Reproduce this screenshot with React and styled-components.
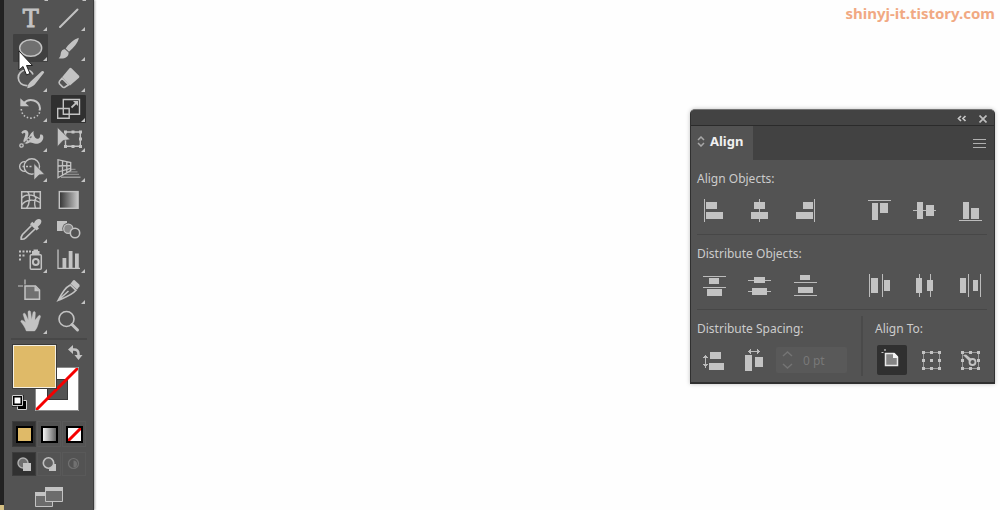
import React from 'react';
import styled, { createGlobalStyle } from 'styled-components';

const GlobalStyle = createGlobalStyle`
  * {
    box-sizing: border-box;
  }

  body {
    margin: 0;
    background: #fefefe;
    font-family: 'Noto Sans', sans-serif;
  }

  button {
    padding: 0;
    border: none;
    background: none;
    font: inherit;
    color: inherit;
  }

  svg {
    display: block;
  }
`;

const Workspace = styled.div`
  display: flex;
  min-height: 100vh;
  overflow: hidden;
`;

const WindowEdge = styled.div`
  width: 4px;
  background: linear-gradient(to top, #d6c184 5px, #222222 5px);
`;

const Toolbar = styled.aside`
  width: 90px;
  padding: 0 6px 0 7px;
  background: #535353;
  border-right: 1px solid #3c3c3c;
  box-shadow: 1px 0 2px rgba(0, 0, 0, 0.35);
`;

const ScrolledRow = styled.div`
  height: 3px;
  padding-left: 31px;
`;

const ToolGrid = styled.div`
  display: grid;
  grid-template-columns: 35px 35px;
  grid-auto-rows: 1fr;
  column-gap: 3px;
  align-items: center;
  height: 333px;
  padding-left: 2px;
`;

const ToolButton = styled.button`
  width: 35px;
  height: 28px;
  border-radius: 1px;
  background: ${props => props.$tone || 'transparent'};
`;

const ToolDivider = styled.hr`
  height: 2px;
  margin: 2px 0 4px;
  border: none;
  background: #484848;
`;

const SwatchGrid = styled.div`
  display: grid;
  grid-template-columns: 23px 22px 22px 1fr;
  grid-template-rows: 23px 22px 22px;
  margin-left: 1px;
`;

const FillSwatch = styled.button`
  grid-area: 1 / 1 / 3 / 3;
  z-index: 1;
  border: 1px solid #3a3a3a;
  background: #dfba68;
  box-shadow: inset 0 0 0 1px #f4efe2;
`;

const StrokeSwatch = styled.button`
  grid-area: 2 / 2 / 4 / 4;
`;

const SwapButton = styled.button`
  grid-area: 1 / 3 / 2 / 5;
  justify-self: start;
  align-self: start;
  margin-left: 10px;
`;

const DefaultsButton = styled.button`
  grid-area: 3 / 1 / 4 / 2;
  align-self: end;
`;

const ModeRow = styled.div`
  display: grid;
  grid-template-columns: repeat(3, 24px);
  gap: 1px;
  height: ${props => props.$height};
  margin: ${props => props.$margin};
`;

const ModeButton = styled.button`
  display: flex;
  align-items: center;
  justify-content: center;
  border: 1px solid ${props => (props.$active ? '#3c3c3c' : '#595959')};
  background: ${props => (props.$active ? '#313131' : 'transparent')};
`;

const ScreenModeButton = styled.button`
  display: block;
  margin: 11px 0 0 24px;
`;

const Canvas = styled.main`
  flex: 1;
  display: flex;
  flex-direction: column;
  align-items: flex-end;
  padding: 0 5px 0 0;
`;

const BlogLink = styled.a`
  height: 26px;
  font-size: 15px;
  line-height: 26px;
  font-weight: 700;
  color: #f1a983;
  text-decoration: none;
`;

const Panel = styled.section`
  width: 305px;
  margin-top: 83px;
  border: 1px solid #303030;
  border-width: 1px 1px 2px;
  border-top-color: #747474;
  border-radius: 5px 5px 0 0;
  background: #535353;
  box-shadow: 0 0 4px rgba(0, 0, 0, 0.25);
  overflow: hidden;
`;

const TitleBar = styled.header`
  display: flex;
  align-items: center;
  justify-content: flex-end;
  gap: 12px;
  height: 16px;
  padding: 2px 7px 0 0;
  background: #434343;
  border-bottom: 1px solid #2b2b2b;
`;

const TabStrip = styled.div`
  display: flex;
  justify-content: space-between;
  height: 34px;
  background: #424242;
`;

const Tab = styled.button`
  display: flex;
  align-items: center;
  gap: 5px;
  width: 62px;
  padding: 0 0 4px 6px;
  background: #535353;
  font-size: 13px;
  font-weight: 700;
  color: #f0f0f0;
`;

const MenuButton = styled.button`
  padding-right: 8px;
`;

const Section = styled.div`
  padding-top: 9px;
  height: ${props => (props.$last ? '72px' : '75px')};
`;

const SectionTitle = styled.h2`
  margin: 0 0 0 6px;
  font-size: 12px;
  line-height: 20px;
  font-weight: 400;
  color: #cccccc;
`;

const Divider = styled.hr`
  height: 1px;
  margin: -1px 7px 0 6px;
  border: none;
  background: #474747;
`;

const ButtonRow = styled.div`
  display: flex;
  justify-content: space-between;
`;

const ButtonGroup = styled.div`
  display: flex;
`;

const AlignButton = styled.button`
  display: flex;
  align-items: center;
  justify-content: center;
  width: ${props => (props.$narrow ? '34px' : '46px')};
  height: 44px;
`;

const BottomSections = styled.div`
  display: grid;
  grid-template-columns: 1fr 133px;
`;

const AlignToSection = styled.div`
  border-left: 2px solid #4a4a4a;
  height: 60px;
  margin-top: 6px;
  padding-top: 3px;
`;

const AlignToTitle = styled(SectionTitle)`
  margin-left: 12px;
`;

const SpacingField = styled.label`
  display: flex;
  align-items: center;
  gap: 10px;
  width: 71px;
  height: 26px;
  margin: 8px 0 0 5px;
  padding-left: 6px;
  border-radius: 2px;
  background: #595959;
`;

const SpacingInput = styled.input`
  width: 40px;
  padding: 0;
  border: none;
  background: transparent;
  font: 12px 'Noto Sans', sans-serif;
  color: #787878;
`;

const AlignToRow = styled.div`
  display: flex;
  gap: 9px;
  padding: 6px 0 0 14px;
`;

const AlignToButton = styled.button`
  display: flex;
  align-items: center;
  justify-content: center;
  width: 30px;
  height: 30px;
  border-radius: 2px;
  background: ${props => (props.$active ? '#303030' : 'transparent')};
`;

const Cursor = styled.svg`
  position: absolute;
  left: 18px;
  top: 50px;
  z-index: 2;
  pointer-events: none;
`;

const ICON = '#c3c3c3';
const MORE = 'M34 23V27H30Z';

const Stroke = ({ w = 1.5, ...rest }) => (
  <path fill="none" stroke={ICON} strokeWidth={w} {...rest} />
);

const TOOLS = [
  {
    name: 'Type', more: true,
    art: (
      <text x="17.7" y="22.6" textAnchor="middle" fontFamily="DejaVu Serif" fontSize="24" stroke={ICON} strokeWidth="0.9">T</text>
    ),
  },
  { name: 'Line Segment', more: true, art: <Stroke d="M9 23 26.5 5.5" w={2} strokeLinecap="round" /> },
  {
    name: 'Ellipse', more: true, tone: '#404040',
    art: <ellipse cx="17.7" cy="14" rx="11" ry="8.3" fill="#707070" stroke={ICON} strokeWidth="1.4" />,
  },
  {
    name: 'Paintbrush', more: true,
    art: (
      <>
        <path d="M27.8 3.8C23.5 5 17 10.500 14.7 14.500L18 17.700C22 14.500 27.500 8.500 27.800 3.800Z" />
        <path d="M14 15.2C11 15.2 9.9 17.500 9.700 19.800 9.500 22.200 9 23.500 7.600 24.300 12.500 25.300 17.900 23.700 17.600 18.600Z" />
      </>
    ),
  },
  {
    name: 'Blob Brush', more: true,
    art: (
      <>
        <Stroke d="M14.5 20.5C9 21 5.500 17.500 5.300 13 5.200 8.500 8.500 5.200 13 5 16.500 5 19 6.800 20 9.500" w={1.7} />
        <path d="M28.700 6.200Q30.500 5.500 31.200 7.500L21.800 19.500C20 21.500 17.500 22.500 14.200 23.300 14.600 20.500 15.600 18.300 17.600 16.500Z" />
      </>
    ),
  },
  {
    name: 'Eraser', more: true,
    art: (
      <>
        <path d="M18.500 3.200Q19.500 2.300 20.500 3.200L28 10.800Q28.800 11.800 28 12.800L19 20.500 11 12.300Z" />
        <Stroke d="M11 13.300 8.500 16.200Q7.700 17.500 8.500 18.700L11.500 21.900Q12.500 22.800 13.700 22.200L17.500 19.800Z" w={1.6} />
      </>
    ),
  },
  {
    name: 'Rotate', more: true,
    art: (
      <>
        <Stroke d="M10.500 8.500C16.500 2 26.500 5.500 27 13.500L26.500 15.500" w={2} />
        <path d="M7.300 3.300V11.300H16Z" />
        <Stroke d="M8.300 14C9 26 25 25.500 26.800 16.500" w={1.6} strokeDasharray="1.500 2" />
      </>
    ),
  },
  {
    name: 'Scale', more: true, tone: '#303030',
    art: (
      <>
        <Stroke d="M12.300 4.500H28.500V19.300H12.300ZM6.700 13.500H18.200V23.300H6.700Z" w={1.4} />
        <Stroke d="M20.500 12.500 25.500 7.700" w={1.8} />
        <path d="M22 6H27V11Z" />
      </>
    ),
  },
  {
    name: 'Width', more: true,
    art: (
      <>
        <path d="M8.300 7.800C10 4 14.800 4.300 15.400 8 15.800 10.700 14 12.500 14.400 13.700 16.300 12.500 16.800 8.500 20.700 6 19.900 9.300 21.500 13 24 13.800 26.500 14.300 27.300 12 27 9.800 29.500 8.800 30.800 11.200 30.200 13.500 29.300 17.300 26 19 22.800 18.800 19.500 18.600 18.300 16.500 15.800 18 13.500 19.200 11.500 18.800 10.500 16.800 10 15 12.600 11.200 12.300 8.500 11.500 7.300 10.300 7.800 10 9Z" />
        <Stroke d="M9 20 18.500 11.500" w={1.3} stroke="#666666" />
        <circle cx="8.500" cy="20.500" r="1.700" fill="#535353" stroke={ICON} strokeWidth="1.300" />
        <circle cx="15.500" cy="14.500" r="1.700" fill="#535353" stroke={ICON} strokeWidth="1.300" />
      </>
    ),
  },
  {
    name: 'Free Transform', more: true,
    art: (
      <>
        <Stroke d="M14.500 7H29.300V21.300H14.500Z" w={1.4} />
        <path d="M6.500 2.500 19 14.500 12 15.500 6.500 21.500Z" stroke="#535353" strokeWidth="0.500" />
        <path d="M13 5.500H16V8.500H13ZM20.500 5.500H23.500V8.500H20.500ZM28 5.500H31V8.500H28ZM28 12.500H31V15.500H28ZM28 20H31V23H28ZM20.500 20H23.500V23H20.500ZM13 20H16V23H13Z" />
      </>
    ),
  },
  {
    name: 'Shape Builder', more: true,
    art: (
      <>
        <Stroke d="M12.500 6.700A4.900 4.900 0 1 0 12.500 16.300" w={1.4} />
        <circle cx="18.800" cy="11.500" r="7.700" fill="none" stroke={ICON} strokeWidth="1.400" />
        <Stroke d="M9.500 11.500H20" w={1.6} strokeDasharray="2 1.500" />
        <path d="M21 8.500 31.500 19.200 26 19.900 21 25Z" stroke="#535353" strokeWidth="0.600" />
      </>
    ),
  },
  {
    name: 'Perspective Grid', more: true,
    art: (
      <>
        <Stroke d="M7 4.700V22.700L19.700 15.500V7.500ZM11.500 5.700V20M15.800 6.600V17.600M7 11 19.700 10.500M7 17 19.700 13.300" w={1.3} />
        <path d="M20 13.800H24.500V15H20ZM18 16.200H26.500V17.400H18ZM14 18.800H28V20H14Z" opacity="0.500" />
        <path d="M10 21.600H29.500V22.800H10Z" opacity="0.800" />
      </>
    ),
  },
  {
    name: 'Mesh',
    art: (
      <>
        <Stroke d="M8.700 5.700H27.300V22.300H8.700Z" w={1.5} />
        <Stroke d="M14.500 5.500C17.500 9 17 18 13.500 22.500M21.500 5.500C20.500 8 21 10 23 12 21 15 21.500 19 22.500 22.500M8.700 12C13 7.500 20 8.500 27 13M8.700 19C13 12.500 22 13.500 27 16.500" w={1.4} />
      </>
    ),
  },
  {
    name: 'Gradient',
    art: (
      <>
        <linearGradient id="toolGradient">
          <stop offset="0" stopColor="#333333" />
          <stop offset="1" stopColor="#c8c8c8" />
        </linearGradient>
        <rect x="8.300" y="5.600" width="18.800" height="16.700" fill="url(#toolGradient)" stroke={ICON} strokeWidth="1.400" />
      </>
    ),
  },
  {
    name: 'Eyedropper', more: true,
    art: (
      <>
        <path d="M17 8.200 19.200 5.800 21 7.200C22.500 3 26.500 2 28 4 29.300 6.500 27 9 24.800 10.700L26 12.500 23.500 14.600Z" />
        <Stroke d="M18.500 9.500 9.500 18.500C8.500 19.800 8 21.500 8.200 23.200 9.800 23.400 11.500 22.900 12.700 21.800L22 13" w={1.7} />
      </>
    ),
  },
  {
    name: 'Blend',
    art: (
      <>
        <path d="M6 5H16V15H6Z" />
        <circle cx="17.300" cy="12.800" r="6" fill="#535353" />
        <circle cx="17.300" cy="12.800" r="4.600" fill="#888888" stroke={ICON} strokeWidth="1.300" />
        <circle cx="24" cy="17" r="4.700" fill="#535353" stroke={ICON} strokeWidth="1.600" />
      </>
    ),
  },
  {
    name: 'Symbol Sprayer', more: true,
    art: (
      <>
        <rect x="17.300" y="8.800" width="11" height="14.500" rx="1" fill="none" stroke={ICON} strokeWidth="1.500" />
        <path d="M20.500 3.500H25V5H26.500V9H19V5H20.500ZM6 4.500H8V6.500H6ZM9.500 4.500H11.500V6.500H9.500ZM13 4.500H15V6.500H13ZM16 4.500H18V6.500H16ZM6 8.500H8V10.500H6ZM9.500 8.500H11.500V10.500H9.500ZM6 12.500H8V14.500H6Z" />
        <circle cx="22.800" cy="16" r="2.900" fill="none" stroke={ICON} strokeWidth="2" />
      </>
    ),
  },
  {
    name: 'Column Graph', more: true,
    art: (
      <>
        <Stroke d="M7 3.500V22.300H29" w={1.3} />
        <path d="M11.500 12H15.300V22H11.500ZM17.700 5H21.500V22H17.700ZM24 7.500H27.800V22H24Z" />
      </>
    ),
  },
  {
    name: 'Artboard',
    art: (
      <>
        <path d="M12 9H22.500L26.500 13V22.300H12Z" fill="#707070" stroke={ICON} strokeWidth="1.500" />
        <path d="M21.500 9 26.800 14.300H21.500Z" />
        <Stroke d="M5 9H10M12 2.500V7.500" w={1.2} />
      </>
    ),
  },
  {
    name: 'Slice', more: true,
    art: (
      <>
        <Stroke d="M19.300 8C14.500 10.500 12 14.500 7.200 23.300 13.500 20.500 20.500 18.500 25 13.300ZM7.500 23 17.500 14" w={1.6} />
        <path d="M19.500 6.700 22 3.500Q22.800 2.800 23.700 3.300L28.300 7.500Q28.900 8.300 28.500 9.200L26 12.700Z" />
      </>
    ),
  },
  {
    name: 'Hand', more: true,
    art: (
      <path d="M13.300 24C12 20 9.500 17 7.800 14.800 7.500 13 9.500 12.800 10.700 13.900L12.600 15.500 10.300 8C9.800 6 12 5.500 12.600 7.300L15.300 13 15 5.200C15 3.300 17.500 3.300 17.700 5.200L18.600 12.600 20 5.600C20.500 4 22.600 4.400 22.400 6.200L21.900 13.300 25.400 8.900C26.500 7.600 28.200 8.700 27.300 10.400 25.500 14 25.500 20 21.700 24Z" stroke={ICON} strokeWidth="0.400" />
    ),
  },
  {
    name: 'Zoom',
    art: (
      <>
        <circle cx="15.500" cy="12" r="7.500" fill="none" stroke={ICON} strokeWidth="1.600" />
        <Stroke d="M21 17.500 26.500 23" w={3} strokeLinecap="round" />
      </>
    ),
  },
];

// [x, y, width, height] boxes on a 24px grid
const ALIGN_OBJECTS = [
  { name: 'Horizontal Align Left', lines: [[2, 0, 1, 23]], bars: [[4, 3, 11, 7], [4, 13, 17, 7]] },
  { name: 'Horizontal Align Center', lines: [[11, 0, 1, 23]], bars: [[6, 3, 11, 7], [3, 13, 17, 7]] },
  { name: 'Horizontal Align Right', lines: [[20, 0, 1, 23]], bars: [[9, 3, 10, 7], [2, 13, 17, 7]] },
  { name: 'Vertical Align Top', lines: [[1, 1, 23, 1]], bars: [[5, 4, 6, 17], [13, 4, 8, 10]] },
  { name: 'Vertical Align Center', lines: [[0, 11, 23, 1]], bars: [[4, 3, 6, 17], [13, 6, 8, 11]] },
  { name: 'Vertical Align Bottom', lines: [[0, 21, 23, 1]], bars: [[4, 3, 6, 17], [12, 9, 8, 11]] },
];

const DISTRIBUTE_OBJECTS = [
  { name: 'Vertical Distribute Top', lines: [[1, 2, 23, 1], [1, 13, 23, 1]], bars: [[7, 4, 10, 6], [5, 15, 15, 7]] },
  { name: 'Vertical Distribute Center', lines: [[0, 6, 23, 1], [0, 17, 23, 1]], bars: [[6, 3, 11, 6], [4, 14, 15, 7]] },
  { name: 'Vertical Distribute Bottom', lines: [[0, 8, 23, 1], [0, 21, 23, 1]], bars: [[6, 1, 10, 5], [4, 13, 15, 6]] },
  { name: 'Horizontal Distribute Left', lines: [[2, 0, 1, 23], [15, 0, 1, 23]], bars: [[4, 4, 7, 15], [17, 6, 6, 11]] },
  { name: 'Horizontal Distribute Center', lines: [[6, 0, 1, 23], [17, 0, 1, 23]], bars: [[3, 4, 6, 15], [14, 6, 6, 11]] },
  { name: 'Horizontal Distribute Right', lines: [[9, 0, 1, 23], [21, 0, 1, 23]], bars: [[1, 4, 6, 15], [14, 6, 5, 11]] },
];

const DISTRIBUTE_SPACING = [
  {
    name: 'Vertical Distribute Space',
    lines: [[3, 6, 1, 13], [1, 8, 5, 1], [1, 15, 5, 1], [2, 7, 3, 1], [2, 16, 3, 1]],
    bars: [[8, 3, 11, 7], [7, 14, 15, 7]],
  },
  {
    name: 'Horizontal Distribute Space',
    lines: [[6, 2, 12, 1], [8, 0, 1, 5], [15, 0, 1, 5], [7, 1, 1, 3], [16, 1, 1, 3]],
    bars: [[3, 6, 7, 16], [13, 8, 8, 10]],
  },
];

const AlignIcon = ({ lines, bars }) => (
  <svg width="24" height="24" aria-hidden="true">
    {[...lines, ...bars].map(([x, y, width, height], i) => (
      <rect key={i} x={x} y={y} width={width} height={height} fill={i < lines.length ? '#bcbcbc' : ICON} />
    ))}
  </svg>
);

const renderAlignButtons = (items) => items.map((item) => (
  <AlignButton key={item.name} aria-label={item.name}>
    <AlignIcon lines={item.lines} bars={item.bars} />
  </AlignButton>
));

const HANDLES = 'M3 3H6V6H3ZM11 3H14V6H11ZM19 3H22V6H19ZM3 11H6V14H3ZM19 11H22V14H19ZM3 19H6V22H3ZM11 19H14V22H11ZM19 19H22V22H19Z';

const ColorModes = () => (
  <ModeRow $height="26px" $margin="10px 0 0 1px">
    <ModeButton $active aria-label="Color">
      <svg width="17" height="17">
        <rect x="1" y="1" width="15" height="15" fill="#dfba68" stroke="#000000" strokeWidth="2" />
      </svg>
    </ModeButton>
    <ModeButton aria-label="Gradient fill">
      <svg width="17" height="17">
        <linearGradient id="modeGradient">
          <stop offset="0" stopColor="#ffffff" />
          <stop offset="1" stopColor="#555555" />
        </linearGradient>
        <rect x="1" y="1" width="15" height="15" fill="url(#modeGradient)" stroke="#000000" strokeWidth="2" />
      </svg>
    </ModeButton>
    <ModeButton aria-label="None">
      <svg width="17" height="17">
        <rect x="1" y="1" width="15" height="15" fill="#ffffff" />
        <path d="M2 15 15 2" stroke="#f50000" strokeWidth="3" />
        <rect x="1" y="1" width="15" height="15" fill="none" stroke="#000000" strokeWidth="2" />
      </svg>
    </ModeButton>
  </ModeRow>
);

const DrawModes = () => (
  <ModeRow $height="24px" $margin="5px 0 0 1px">
    <ModeButton $active aria-label="Draw Normal">
      <svg width="16" height="16">
        <circle cx="7" cy="7" r="5" fill="#707070" stroke="#b0b0b0" strokeWidth="1.400" />
        <path d="M7 7H15V15H7Z" fill={ICON} />
      </svg>
    </ModeButton>
    <ModeButton aria-label="Draw Behind">
      <svg width="16" height="16">
        <path d="M8 8H15V15H8Z" fill={ICON} />
        <circle cx="7.500" cy="7" r="5.200" fill="#606060" stroke="#c0c0c0" strokeWidth="1.600" />
      </svg>
    </ModeButton>
    <ModeButton disabled aria-label="Draw Inside">
      <svg width="16" height="16">
        <circle cx="7.500" cy="7.500" r="5" fill="none" stroke="#717171" strokeWidth="1.200" />
        <path d="M7.500 7.500V4.500A3 3 0 0 1 7.500 11.500Z" fill="#717171" />
      </svg>
    </ModeButton>
  </ModeRow>
);

const ToolPanel = () => (
  <Toolbar aria-label="Tools">
    <ScrolledRow>
      <svg width="46" height="3">
        <path d="M6 -3V1H2ZM44 -3V1H40Z" fill={ICON} />
      </svg>
    </ScrolledRow>
    <ToolGrid>
      {TOOLS.map((tool) => (
        <ToolButton key={tool.name} $tone={tool.tone} aria-label={tool.name}>
          <svg width="35" height="28" fill={ICON}>
            {tool.art}
            {tool.more && <path d={MORE} />}
          </svg>
        </ToolButton>
      ))}
    </ToolGrid>
    <ToolDivider />
    <SwatchGrid>
      <FillSwatch aria-label="Fill" />
      <StrokeSwatch aria-label="Stroke">
        <svg width="44" height="44">
          <path d="M0 0H44V44H0ZM12 12V33H33V12Z" fill="#ffffff" fillRule="evenodd" />
          <rect x="12.500" y="12.500" width="20" height="20" fill="#535353" stroke="#383838" />
          <path d="M1 43 43 1" stroke="#f50000" strokeWidth="3" />
          <path d="M.5 .5H43.500V43.500H.5Z" fill="none" stroke="#8b8b8b" />
        </svg>
      </StrokeSwatch>
      <SwapButton aria-label="Swap Fill and Stroke">
        <svg width="16" height="17">
          <path d="M4 5.500H7Q11.500 5.500 11.500 10V12" fill="none" stroke={ICON} strokeWidth="2.500" />
          <path d="M6 1V10L1 5.500ZM7.500 11H15.500L11.500 16Z" fill={ICON} />
        </svg>
      </SwapButton>
      <DefaultsButton aria-label="Default Fill and Stroke">
        <svg width="16" height="16">
          <path d="M5.500 5.500H14.500V14.500H5.500Z" fill="#000000" stroke="#d0d0d0" />
          <path d="M9 9H11V11H9Z" fill="#ffffff" />
          <path d="M1 1H10V10H1Z" fill="#ffffff" stroke="#000000" strokeWidth="3" />
          <path d="M.5 .5H10.500V10.500H.5Z" fill="none" stroke="#d0d0d0" />
        </svg>
      </DefaultsButton>
    </SwatchGrid>
    <ColorModes />
    <DrawModes />
    <ScreenModeButton aria-label="Change Screen Mode">
      <svg width="28" height="20">
        <path d="M.5 5.500H17.500V19.500H.5Z" fill="#6c6c6c" stroke={ICON} />
        <path d="M0 5H18V9H0Z" fill={ICON} />
        <path d="M10.500 .5H27.500V14.500H10.500Z" fill="#6c6c6c" stroke={ICON} />
        <path d="M10 0H28V4H10Z" fill={ICON} />
      </svg>
    </ScreenModeButton>
  </Toolbar>
);

const AlignPanel = () => (
  <Panel aria-label="Align panel">
    <TitleBar>
      <button aria-label="Collapse">
        <svg width="10" height="7">
          <path d="M4 1 1.500 3.500 4 6M8.500 1 6 3.500 8.500 6" fill="none" stroke="#c8c8c8" strokeWidth="1.700" />
        </svg>
      </button>
      <button aria-label="Close">
        <svg width="8" height="8">
          <path d="M.5 .5 7.500 7.500M7.500 .5 .5 7.500" fill="none" stroke="#bdbdbd" strokeWidth="1.700" />
        </svg>
      </button>
    </TitleBar>
    <TabStrip>
      <Tab>
        <svg width="8" height="11">
          <path d="M1 4 4 1 7 4M1 7 4 10 7 7" fill="none" stroke="#a8a8a8" strokeWidth="1.500" />
        </svg>
        Align
      </Tab>
      <MenuButton aria-label="Panel menu">
        <svg width="13" height="9">
          <path d="M0 .5H13M0 4.500H13M0 8.500H13" stroke="#b0b0b0" />
        </svg>
      </MenuButton>
    </TabStrip>

    <Section>
      <SectionTitle>Align Objects:</SectionTitle>
      <ButtonRow>
        <ButtonGroup>{renderAlignButtons(ALIGN_OBJECTS.slice(0, 3))}</ButtonGroup>
        <ButtonGroup>{renderAlignButtons(ALIGN_OBJECTS.slice(3))}</ButtonGroup>
      </ButtonRow>
    </Section>
    <Divider />
    <Section>
      <SectionTitle>Distribute Objects:</SectionTitle>
      <ButtonRow>
        <ButtonGroup>{renderAlignButtons(DISTRIBUTE_OBJECTS.slice(0, 3))}</ButtonGroup>
        <ButtonGroup>{renderAlignButtons(DISTRIBUTE_OBJECTS.slice(3))}</ButtonGroup>
      </ButtonRow>
    </Section>
    <Divider />
    <BottomSections>
      <Section $last>
        <SectionTitle>Distribute Spacing:</SectionTitle>
        <ButtonGroup>
          <AlignButton aria-label={DISTRIBUTE_SPACING[0].name}>
            <AlignIcon {...DISTRIBUTE_SPACING[0]} />
          </AlignButton>
          <AlignButton $narrow aria-label={DISTRIBUTE_SPACING[1].name}>
            <AlignIcon {...DISTRIBUTE_SPACING[1]} />
          </AlignButton>
          <SpacingField>
            <svg width="11" height="18">
              <path d="M1 5 5.500 1 10 5M1 13 5.500 17 10 13" fill="none" stroke="#747474" strokeWidth="1.500" />
            </svg>
            <SpacingInput aria-label="Spacing" defaultValue="0 pt" disabled />
          </SpacingField>
        </ButtonGroup>
      </Section>
      <AlignToSection>
        <AlignToTitle>Align To:</AlignToTitle>
        <AlignToRow>
          <AlignToButton $active aria-label="Align to Artboard">
            <svg width="24" height="24">
              <path d="M5.500 5.500H14L17.500 9V17.500H5.500Z" fill="#858585" stroke="#e8e8e8" strokeWidth="1.500" />
              <path d="M13 5H14.500L18 8.500V10H13Z" fill="#f4f4f4" />
              <path d="M1.500 4.500H3.500M5 1V3" stroke="#c8c8c8" strokeWidth="1.200" />
            </svg>
          </AlignToButton>
          <AlignToButton aria-label="Align to Selection">
            <svg width="24" height="24" fill={ICON}>
              <path d="M4.500 4.500H20.500V20.500H4.500Z" fill="none" stroke="#999999" />
              <path d={HANDLES} />
              <path d="M11 11H14V14H11Z" />
            </svg>
          </AlignToButton>
          <AlignToButton aria-label="Align to Key Object">
            <svg width="24" height="24" fill={ICON}>
              <path d="M4.500 4.500H20.500V20.500H4.500Z" fill="none" stroke="#999999" />
              <path d={HANDLES} />
              <path d="M5 7 8 6.500 14 11.500 12 14Z" />
              <circle cx="14.500" cy="14" r="3" fill="none" stroke={ICON} strokeWidth="1.800" />
            </svg>
          </AlignToButton>
        </AlignToRow>
      </AlignToSection>
    </BottomSections>
  </Panel>
);

const App = () => {
  return (
    <>
      <GlobalStyle />
      <Workspace>
        <WindowEdge />
        <ToolPanel />
        <Canvas>
          <BlogLink href="#">shinyj-it.tistory.com</BlogLink>
          <AlignPanel />
        </Canvas>
        <Cursor width="16" height="27" viewBox="0 0 16 27">
          <path d="M1 1V20L5 16.500 8.500 25 12 23.500 8.500 15.500H14.500Z" fill="#ffffff" stroke="#222222" />
        </Cursor>
      </Workspace>
    </>
  );
};

export default App;
